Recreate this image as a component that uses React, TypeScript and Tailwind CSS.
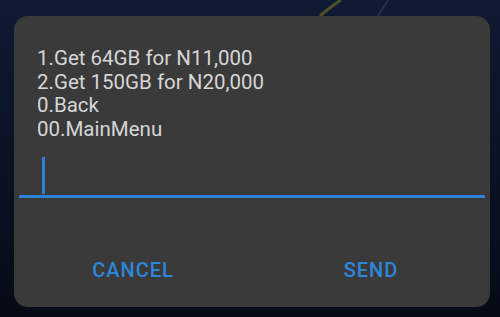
import React from 'react';

const lines = ['1.Get 64GB for N11,000', '2.Get 150GB for N20,000', '0.Back', '00.MainMenu'];

export default function App() {
  return (
    <div
      className="relative h-[317px] w-[500px] overflow-hidden bg-gradient-to-b from-[#0f1b33] to-[#060b16]"
      style={{ fontFamily: 'Roboto, "Noto Sans", sans-serif' }}
    >
      {/* Wallpaper strokes */}
      <svg className="absolute inset-0" width="500" height="317" viewBox="0 0 500 317">
        <path d="M320 16 C327 10 333 5 341 0" stroke="#4f5128" strokeWidth="3" fill="none" />
        <path d="M378 16 C382 10 385 5 388 0" stroke="#25304a" strokeWidth="2" fill="none" />
      </svg>

      <div className="relative px-[14px] pt-[16px]">
        {/* Dialog */}
        <div className="flex h-[291px] w-[476px] flex-col rounded-[14px] bg-[#3a3a3a]">
          <div className="pl-[23px] pt-[31px] text-[20.5px] leading-[23.5px] text-[#d6d6d6]">
            {lines.map((l) => (
              <div key={l}>{l}</div>
            ))}
          </div>

          {/* Input */}
          <div className="mx-[5px] mt-[16px] h-[41px] border-b-[3px] border-[#2f80d6] pl-[23px]">
            <div className="h-[37px] w-[3px] bg-[#2f80d6]" />
          </div>

          {/* Buttons */}
          <div className="flex flex-1 items-center pt-[35px] text-[20px] font-medium tracking-[1px] text-[#2c87dc]">
            <div className="flex-1 text-center">CANCEL</div>
            <div className="flex-1 text-center">SEND</div>
          </div>
        </div>
      </div>
    </div>
  );
}
